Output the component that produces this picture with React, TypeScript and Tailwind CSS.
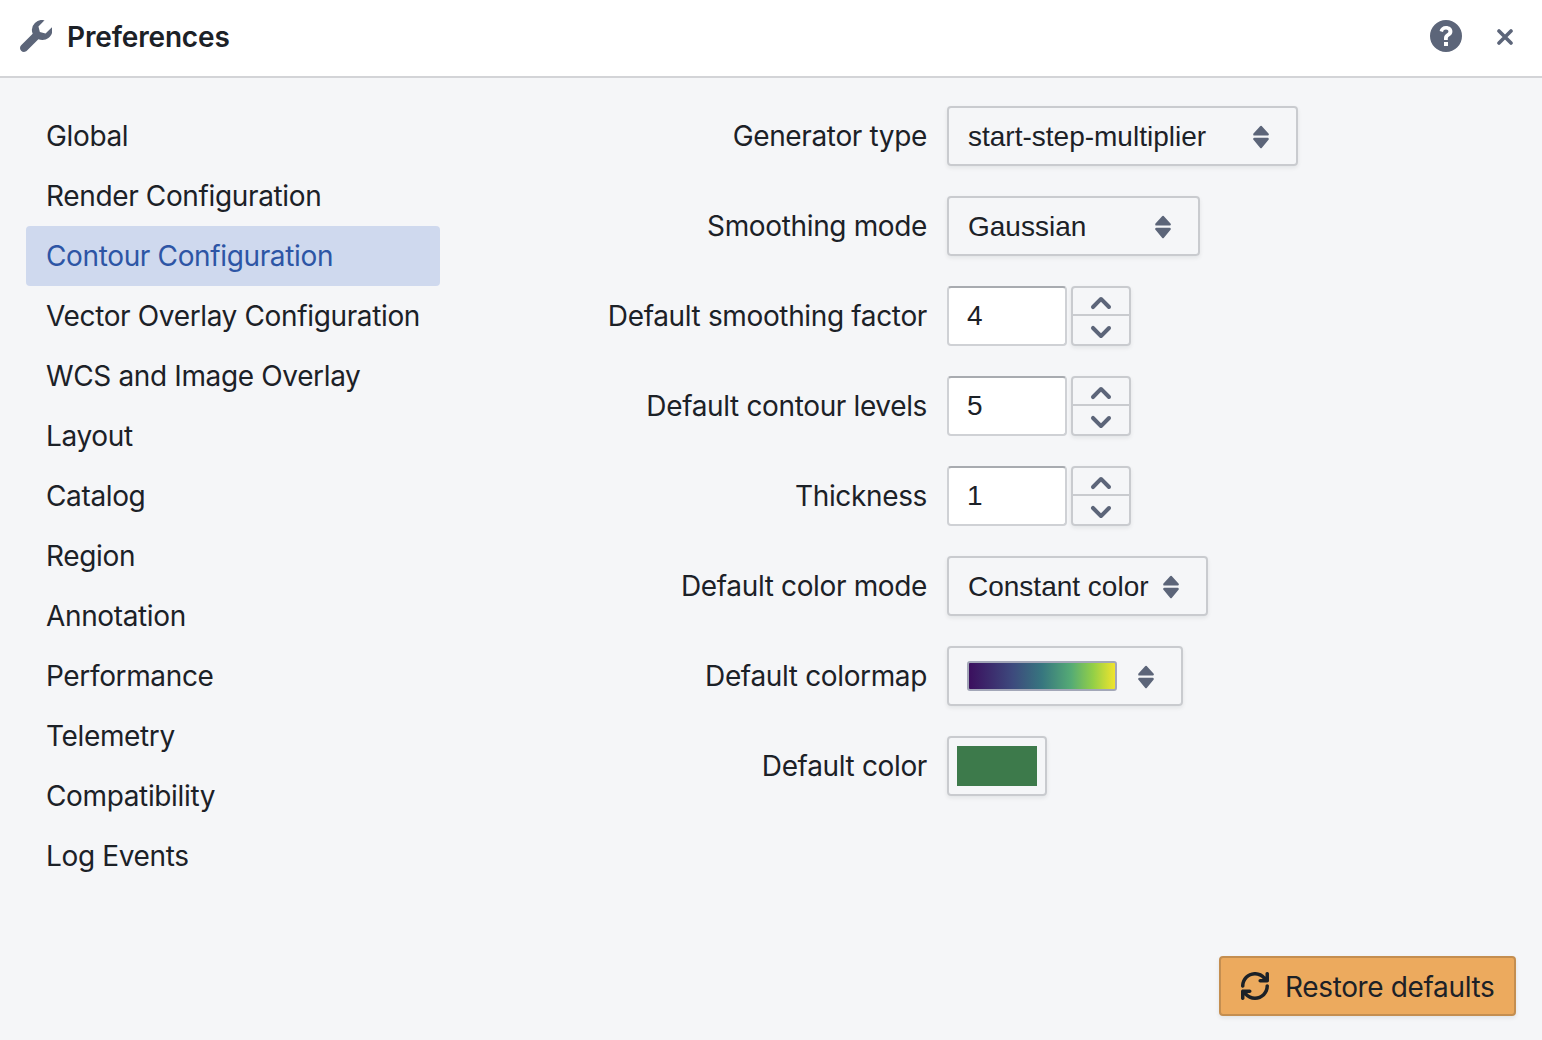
import React from "react";

const I = ({ d, c = "", fill = "#5c6579" }: { d: string; c?: string; fill?: string }) => (
  <svg viewBox="0 0 16 16" className={c} fill={fill}>
    <path fillRule="evenodd" d={d} />
  </svg>
);

const wrench = "M15.83 3.7l-3.06 3.05-2.84-.7-.7-2.83L12.29.17a5.004 5.004 0 00-4.83 1.29 4.967 4.967 0 00-1.12 5.36L.58 12.58c-.36.36-.58.86-.58 1.41 0 1.1.9 2 2 2 .55 0 1.05-.22 1.41-.59l5.77-5.77c.64.25 1.33.4 2.05.4 2.76 0 5-2.24 5-5 0-.47-.08-.91-.2-1.33z";
const up = "M12.71 9.29l-4-4C8.53 5.11 8.28 5 8 5s-.53.11-.71.29l-4 4a1.003 1.003 0 001.42 1.42L8 7.41l3.29 3.29c.18.19.43.3.71.3a1.003 1.003 0 00.71-1.71z";
const down = "M12 5c-.28 0-.53.11-.71.29L8 8.59l-3.29-3.3a1.003 1.003 0 00-1.42 1.42l4 4c.18.18.43.29.71.29s.53-.11.71-.29l4-4A1.003 1.003 0 0012 5z";
const refresh = "M14.99 6.99c-.55 0-1 .45-1 1 0 3.31-2.69 6-6 6-1.77 0-3.36-.78-4.46-2h1.46c.55 0 1-.45 1-1s-.45-1-1-1h-4c-.55 0-1 .45-1 1v4c0 .55.45 1 1 1s1-.45 1-1v-1.73a7.99 7.99 0 006 2.73c4.42 0 8-3.58 8-8 0-.55-.45-1-1-1zm0-7c-.55 0-1 .45-1 1v1.73a7.99 7.99 0 00-6-2.73c-4.42 0-8 3.58-8 8 0 .55.45 1 1 1s1-.45 1-1c0-3.31 2.69-6 6-6 1.77 0 3.36.78 4.46 2h-1.46c-.55 0-1 .45-1 1s.45 1 1 1h4c.55 0 1-.45 1-1v-4c0-.55-.45-1-1-1z";
const help = "M8 0a8 8 0 100 16A8 8 0 008 0zM7 11h2v2H7v-2zM8 3c1.9 0 3.2 1.1 3.2 2.7 0 1.1-.5 1.8-1.5 2.4-.6.4-.8.6-.8 1.2V10H7V9.1c0-1.1.5-1.8 1.4-2.4.6-.4.8-.6.8-1 0-.5-.5-.9-1.2-.9-.8 0-1.3.4-1.5 1.2L4.8 5.5C5.1 4 6.3 3 8 3z";

const Caret = () => (
  <svg viewBox="0 0 16 24" className="w-4 h-6 shrink-0 mt-[2px]" fill="#5c6579" stroke="#5c6579" strokeWidth="2.4" strokeLinejoin="round">
    <path d="M8 2 14.6 9.4H1.4Z" />
    <path d="M1.4 14H14.6L8 22Z" />
  </svg>
);

const Cross = () => (
  <svg viewBox="0 0 16 16" className="w-4 h-4 mr-[8px]" fill="none" stroke="#5c6579" strokeWidth="3.6" strokeLinecap="round">
    <path d="M2 2 14 14M14 2 2 14" />
  </svg>
);

const tabs = ["Global", "Render Configuration", "Contour Configuration", "Vector Overlay Configuration", "WCS and Image Overlay", "Layout", "Catalog", "Region", "Annotation", "Performance", "Telemetry", "Compatibility", "Log Events"];

const box = "h-[60px] rounded-[4px] border-2 border-[#c9cbcf] shadow-[0_2px_4px_rgba(17,20,24,0.08)]";

const Select = ({ w, children, left = "pl-[19px]" }: { w: string; children: React.ReactNode; left?: string }) => (
  <div className={`${box} ${w} ${left} flex items-center justify-between pr-[27px]`}>
    {children}
    <Caret />
  </div>
);

const Txt = ({ t }: { t: string }) => (
  <span className="pt-[1px] text-[28px] tracking-normal font-['Liberation_Sans',sans-serif] text-[#1c2127] whitespace-nowrap">{t}</span>
);

const Num = ({ v }: { v: string }) => (
  <div className="flex gap-[4px]">
    <div className="w-[120px] h-[60px] rounded-[4px] border-2 border-[#cfd1d5] border-t-[#a8abb0] bg-white flex items-center pl-[18px] pb-[2px]">
      <Txt t={v} />
    </div>
    <div className={`${box} w-[60px] flex flex-col`}>
      <div className="h-[28px] shrink-0 flex items-center justify-center pr-[1px] pt-[3px] border-b-2 border-[#c9cbcf]">
        <I d={up} c="w-8 h-8 shrink-0" />
      </div>
      <div className="h-[28px] shrink-0 flex items-center justify-center pr-[1px] pt-[3px]">
        <I d={down} c="w-8 h-8 shrink-0" />
      </div>
    </div>
  </div>
);

const Row = ({ label, children }: { label: string; children: React.ReactNode }) => (
  <div className="flex items-center h-[60px]">
    <div className="w-[403px] pr-[20px] text-right text-[28px] whitespace-nowrap text-[#1c2127]">{label}</div>
    {children}
  </div>
);

export default function App() {
  return (
    <div className="w-[1542px] h-[1040px] flex flex-col overflow-hidden bg-[#f5f6f8] font-['Inter',sans-serif] tracking-[-0.36px] text-[#1c2127]">
      <header className="h-[78px] shrink-0 bg-white border-b-2 border-[#d3d4d7] flex items-center pb-[2px] pl-[20px] pr-[21px]">
        <I d={wrench} c="w-8 h-8 mr-[15px] mb-[2px]" />
        <h1 className="text-[28px] font-semibold tracking-[-0.15px] flex-1">Preferences</h1>
        <I d={help} c="w-8 h-8 mr-[35px] mb-[2px]" />
        <Cross />
      </header>
      <main className="flex-1 flex pt-[28px] pl-[26px]">
        <nav className="w-[414px] shrink-0">
          {tabs.map((t) => (
            <div
              key={t}
              className={`h-[60px] rounded-[4px] pl-[20px] flex items-center text-[28px] whitespace-nowrap ${t === "Contour Configuration" ? "bg-[#cfd9ee] text-[#2d55a5]" : ""}`}
            >
              {t}
            </div>
          ))}
        </nav>
        <section className="ml-[104px] flex flex-col gap-[30px]">
          <Row label="Generator type">
            <Select w="w-[351px]"><Txt t="start-step-multiplier" /></Select>
          </Row>
          <Row label="Smoothing mode">
            <Select w="w-[253px]"><Txt t="Gaussian" /></Select>
          </Row>
          <Row label="Default smoothing factor"><Num v="4" /></Row>
          <Row label="Default contour levels"><Num v="5" /></Row>
          <Row label="Thickness"><Num v="1" /></Row>
          <Row label="Default color mode">
            <Select w="w-[261px]"><Txt t="Constant color" /></Select>
          </Row>
          <Row label="Default colormap">
            <Select w="w-[236px]" left="pl-[18px]">
              <div className="w-[150px] h-[30px] rounded-[3px] border-2 border-[#a3a7b8] bg-[linear-gradient(to_right,#3b0f5e,#3d4a7d_30%,#37767f_50%,#55ab75_70%,#93cf47_85%,#f0e42d)]" />
            </Select>
          </Row>
          <Row label="Default color">
            <div className={`${box} w-[100px] flex items-center justify-center`}>
              <div className="w-[80px] h-[40px] bg-[#3d7a4b]" />
            </div>
          </Row>
        </section>
      </main>
      <footer className="h-[84px] shrink-0 flex justify-end items-start pr-[26px]">
        <button className="w-[297px] h-[60px] rounded-[4px] border-2 border-[#c48e50] bg-[#ecaa5e] shadow-[0_2px_4px_rgba(17,20,24,0.08)] flex items-center pl-[20px] text-[28px] text-[#1c2127]">
          <I d={refresh} c="w-7 h-7 mr-[16px]" fill="#1c2127" />
          <span className="pt-[1px]">Restore defaults</span>
        </button>
      </footer>
    </div>
  );
}
